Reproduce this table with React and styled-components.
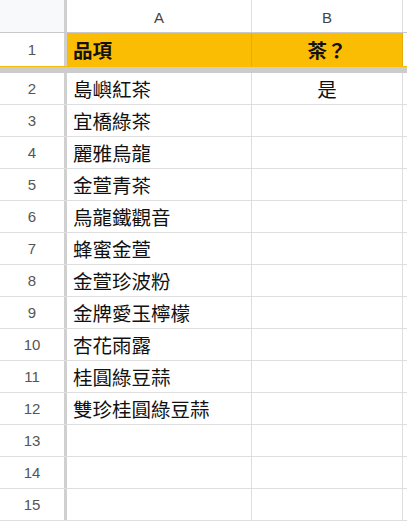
import React from 'react';
import styled, { createGlobalStyle } from 'styled-components';

const GlobalStyle = createGlobalStyle`
  html, body {
    margin: 0;
    padding: 0;
    background: #ffffff;
  }
  body {
    font-family: "Liberation Sans", Arial, sans-serif;
  }
`;

const items = [
  { name: '島嶼紅茶', tea: '是' },
  { name: '宜橋綠茶' },
  { name: '麗雅烏龍' },
  { name: '金萱青茶' },
  { name: '烏龍鐵觀音' },
  { name: '蜂蜜金萱' },
  { name: '金萱珍波粉' },
  { name: '金牌愛玉檸檬' },
  { name: '杏花雨露' },
  { name: '桂圓綠豆蒜' },
  { name: '雙珍桂圓綠豆蒜' },
  { name: '' },
  { name: '' },
  { name: '' },
];

const Sheet = styled.div`
  width: 407px;
  height: 523px;
  overflow: hidden;
  display: flex;
  flex-direction: column;
`;

const Row = styled.div`
  display: flex;
  flex: none;
  height: ${p => p.$height}px;
  border-bottom: 1px solid ${p => p.$line || '#dedede'};
  background: ${p => p.$bg || '#ffffff'};
`;

const FreezeBar = styled.div`
  flex: none;
  height: 6px;
  background: #cccccc;
`;

const RowHead = styled.div`
  flex: none;
  width: 64px;
  border-right: 3px solid #d0d0d0;
  background: ${p => (p.$corner ? '#f8f9fa' : '#ffffff')};
  display: flex;
  align-items: center;
  justify-content: center;
  font-size: 15px;
  color: #555555;
`;

const Cell = styled.div`
  flex: none;
  width: ${p => p.$width}px;
  border-right: 1px solid ${p => p.$line || '#dedede'};
  display: flex;
  align-items: center;
  justify-content: ${p => (p.$center ? 'center' : 'flex-start')};
  padding: 0 6px;
  box-sizing: border-box;
  font-family: "Noto Sans CJK TC", "Noto Sans", sans-serif;
  font-size: 19.5px;
  font-weight: ${p => (p.$bold ? 700 : 400)};
  color: #111111;
  white-space: nowrap;
  overflow: hidden;
`;

const ColLetter = styled(Cell)`
  font-family: "Liberation Sans", Arial, sans-serif;
  font-size: 15px;
  color: #444444;
  justify-content: center;
  padding-top: 2px;
`;

const Filler = styled.div`
  flex: 1;
`;

export default function App() {
  return (
    <>
      <GlobalStyle />
      <Sheet>
        <Row $height={32} $line="#c9c9c9">
          <RowHead $corner />
          <ColLetter $width={185}>A</ColLetter>
          <ColLetter $width={151}>B</ColLetter>
          <Filler />
        </Row>
        <Row $height={33} $line="#fbbc04" $bg="#fbbc04">
          <RowHead>1</RowHead>
          <Cell $width={185} $bold $line="#e2ad0a">品項</Cell>
          <Cell $width={151} $bold $center $line="#e2ad0a">茶？</Cell>
          <Filler style={{ background: '#ffffff' }} />
        </Row>
        <FreezeBar />
        {items.map((it, i) => (
          <Row key={i} $height={31}>
            <RowHead>{i + 2}</RowHead>
            <Cell $width={185}>{it.name}</Cell>
            <Cell $width={151} $center>{it.tea || ''}</Cell>
            <Filler />
          </Row>
        ))}
      </Sheet>
    </>
  );
}
